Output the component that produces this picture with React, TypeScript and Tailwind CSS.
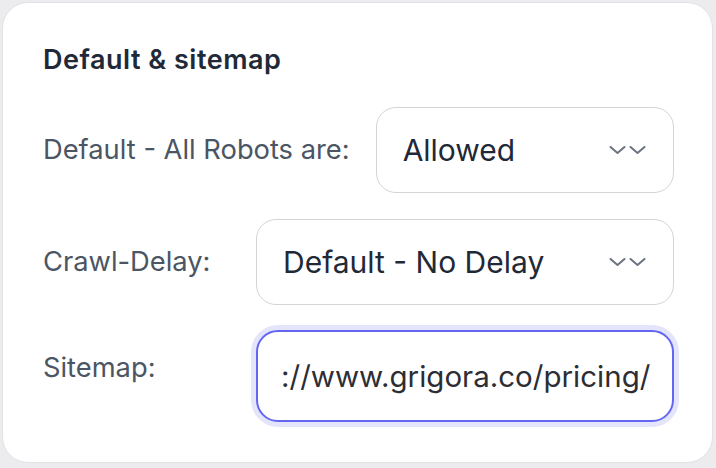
const font = { fontFamily: 'Inter, "Noto Sans", sans-serif' };

function DoubleChevron() {
  return (
    <svg width="40" height="10" viewBox="0 0 40 10" fill="none" className="shrink-0 text-[#6b7280]">
      <path d="M1.5 2 L8.5 8 L15.5 2" stroke="currentColor" strokeWidth="2" strokeLinecap="round" strokeLinejoin="round" />
      <path d="M21.5 2 L28.5 8 L35.5 2" stroke="currentColor" strokeWidth="2" strokeLinecap="round" strokeLinejoin="round" />
    </svg>
  );
}

function SelectBox({ value, className }: { value: string; className?: string }) {
  return (
    <div
      className={
        'flex h-[86px] min-w-0 items-center justify-between rounded-[20px] border border-[#d4d4d8] bg-white pl-[26px] pr-[24px] text-[30px] text-[#1f2937] ' +
        (className ?? '')
      }
    >
      <span className="whitespace-nowrap">{value}</span>
      <DoubleChevron />
    </div>
  );
}

export default function App() {
  return (
    <div className="h-[468px] w-[716px] bg-[#ececef] p-[2px]" style={font}>
      <div className="flex h-[461px] w-[711px] flex-col rounded-[26px] border border-[#e2e2e6] bg-white pl-[40px] pr-[38px] pt-[42px]">
        <h2 className="text-[27px] font-semibold leading-[30px] tracking-[0.5px] text-[#1f2937]">Default &amp; sitemap</h2>

        <div className="mt-[32px] flex items-center gap-[26px]">
          <span className="shrink-0 whitespace-nowrap text-[27.3px] text-[#4b5563]">Default - All Robots are:</span>
          <SelectBox value="Allowed" className="flex-1" />
        </div>

        <div className="mt-[26px] flex items-center">
          <span className="w-[213px] shrink-0 text-[27.3px] text-[#4b5563]">Crawl-Delay:</span>
          <SelectBox value="Default - No Delay" className="flex-1" />
        </div>

        <div className="mt-[25px] flex items-start">
          <span className="w-[213px] shrink-0 pt-[18px] text-[27.3px] text-[#4b5563]">Sitemap:</span>
          <div className="flex h-[92px] min-w-0 flex-1 items-center overflow-hidden whitespace-nowrap rounded-[22px] border-2 border-[#6366f1] bg-white px-[23px] text-[29.5px] text-[#2d2d33] ring-[5px] ring-[#e4e4fb]">
            ://www.grigora.co/pricing/
          </div>
        </div>
      </div>
    </div>
  );
}
